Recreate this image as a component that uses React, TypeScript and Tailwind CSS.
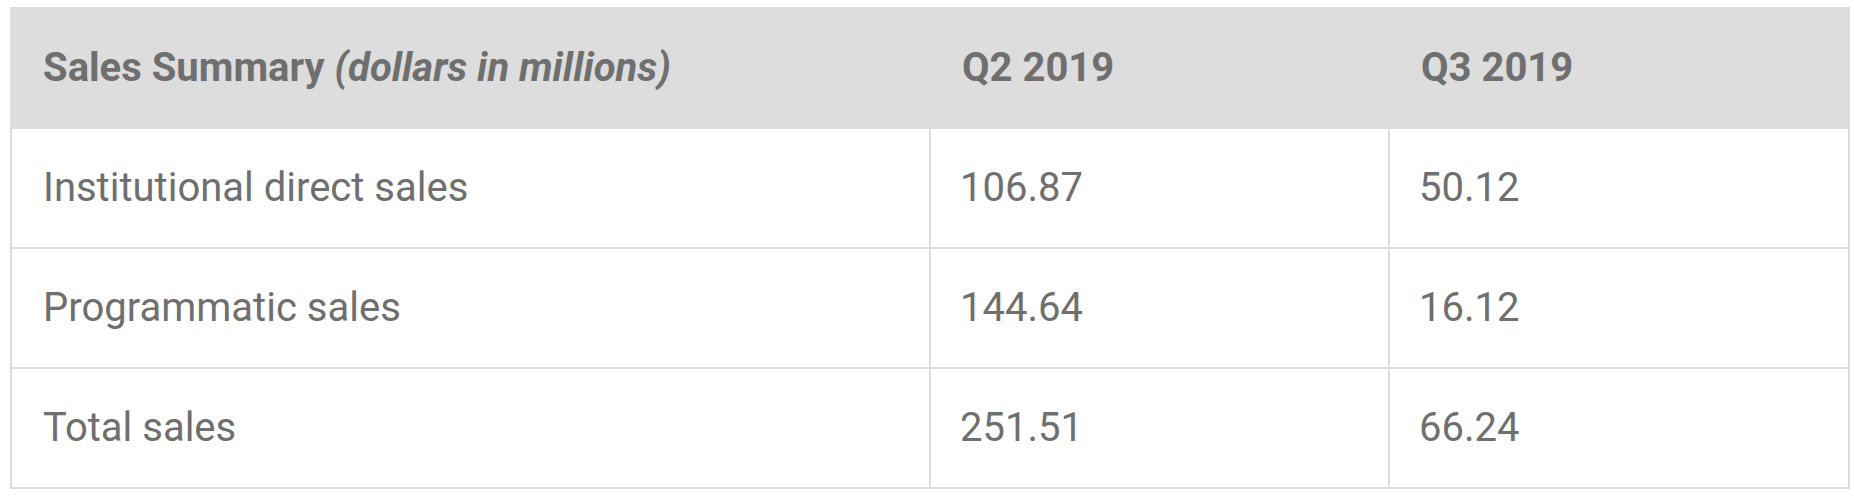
import React from "react";

const rows = [
  { label: "Institutional direct sales", q2: "106.87", q3: "50.12" },
  { label: "Programmatic sales", q2: "144.64", q3: "16.12" },
  { label: "Total sales", q2: "251.51", q3: "66.24" },
];

export default function App() {
  return (
    <div className="min-h-screen bg-white pt-[7px] pl-[10px]" style={{ fontFamily: "Roboto, 'Noto Sans', sans-serif" }}>
      <table className="w-[1840px] table-fixed border-separate border-spacing-0 text-[#6f6f6f]">
        <colgroup>
          <col className="w-[921px]" />
          <col className="w-[459px]" />
          <col className="w-[460px]" />
        </colgroup>
        <thead>
          <tr className="h-[122px] bg-[#dddddd]">
            <th className="pl-[33px] text-left align-middle text-[40px] font-bold">
              Sales Summary <em className="font-bold italic">(dollars in millions)</em>
            </th>
            <th className="pl-[31px] text-left align-middle text-[40px] font-bold">Q2 2019</th>
            <th className="pl-[31px] text-left align-middle text-[40px] font-bold">Q3 2019</th>
          </tr>
        </thead>
        <tbody>
          {rows.map((r) => (
            <tr key={r.label} className="h-[120px]">
              <td className="border-b-2 border-l-2 border-r-2 border-[#dddddd] pl-[31px] align-middle text-[40px]">
                {r.label}
              </td>
              <td className="border-b-2 border-r-2 border-[#dddddd] pl-[29px] align-middle text-[40px]">{r.q2}</td>
              <td className="border-b-2 border-r-2 border-[#dddddd] pl-[29px] align-middle text-[40px]">{r.q3}</td>
            </tr>
          ))}
        </tbody>
      </table>
    </div>
  );
}
